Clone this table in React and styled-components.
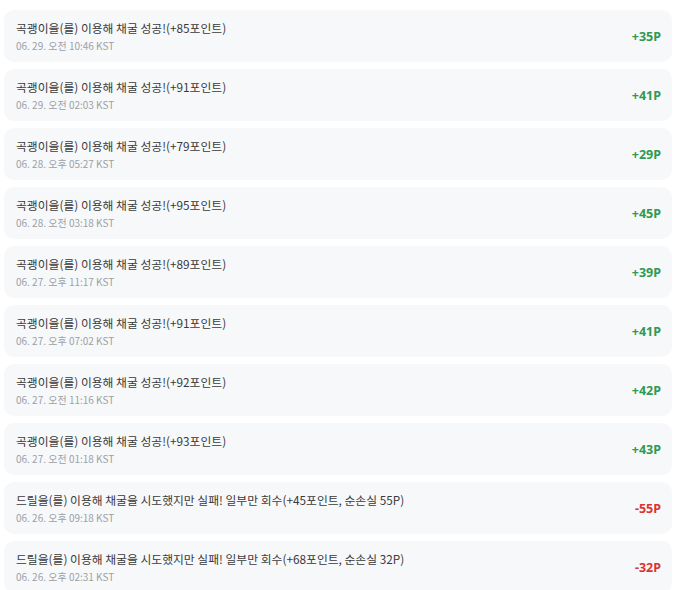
import React from 'react'
import styled, { createGlobalStyle } from 'styled-components'

const GlobalStyle = createGlobalStyle`
    body {
        margin: 0;
        background: #ffffff;
        font-family: "Noto Sans CJK KR", "Noto Sans", sans-serif;
    }
`

const logs = [
    { text: '곡괭이을(를) 이용해 채굴 성공!(+85포인트)', date: '06. 29. 오전 10:46 KST', point: 35 },
    { text: '곡괭이을(를) 이용해 채굴 성공!(+91포인트)', date: '06. 29. 오전 02:03 KST', point: 41 },
    { text: '곡괭이을(를) 이용해 채굴 성공!(+79포인트)', date: '06. 28. 오후 05:27 KST', point: 29 },
    { text: '곡괭이을(를) 이용해 채굴 성공!(+95포인트)', date: '06. 28. 오전 03:18 KST', point: 45 },
    { text: '곡괭이을(를) 이용해 채굴 성공!(+89포인트)', date: '06. 27. 오후 11:17 KST', point: 39 },
    { text: '곡괭이을(를) 이용해 채굴 성공!(+91포인트)', date: '06. 27. 오후 07:02 KST', point: 41 },
    { text: '곡괭이을(를) 이용해 채굴 성공!(+92포인트)', date: '06. 27. 오전 11:16 KST', point: 42 },
    { text: '곡괭이을(를) 이용해 채굴 성공!(+93포인트)', date: '06. 27. 오전 01:18 KST', point: 43 },
    { text: '드릴을(를) 이용해 채굴을 시도했지만 실패! 일부만 회수(+45포인트, 순손실 55P)', date: '06. 26. 오후 09:18 KST', point: -55 },
    { text: '드릴을(를) 이용해 채굴을 시도했지만 실패! 일부만 회수(+68포인트, 순손실 32P)', date: '06. 26. 오후 02:31 KST', point: -32 },
]

const App = () => {
    return (
        <>
            <GlobalStyle />
            <List>
                {logs.map((log, i) => (
                    <Card key={i}>
                        <Info>
                            <Title>{log.text}</Title>
                            <Time>{log.date}</Time>
                        </Info>
                        <Point $minus={log.point < 0}>
                            {log.point < 0 ? `${log.point}P` : `+${log.point}P`}
                        </Point>
                    </Card>
                ))}
            </List>
        </>
    )
}
export default App

const List = styled.div`
    display: flex;
    flex-direction: column;
    gap: 7px;
    padding: 10px 5px 0 4px;
    width: 668px;
`
const Card = styled.div`
    display: flex;
    align-items: center;
    justify-content: space-between;
    height: 52px;
    box-sizing: border-box;
    padding: 0 11px 0 12px;
    background-color: #f7f8fa;
    border-radius: 10px;
`
const Info = styled.div`
    display: flex;
    flex-direction: column;
    gap: 2px;
    margin-top: -1px;
`
const Title = styled.span`
    color: #3a3a3a;
    font-size: 11.8px;
    line-height: 18px;
`
const Time = styled.span`
    color: #9aa0a8;
    font-size: 10px;
    line-height: 14px;
`
const Point = styled.span`
    color: ${(props) => (props.$minus ? '#dc3232' : '#2e9a52')};
    font-size: 12.5px;
    font-weight: 700;
    font-family: "Noto Sans", sans-serif;
    margin-top: 1px;
`
